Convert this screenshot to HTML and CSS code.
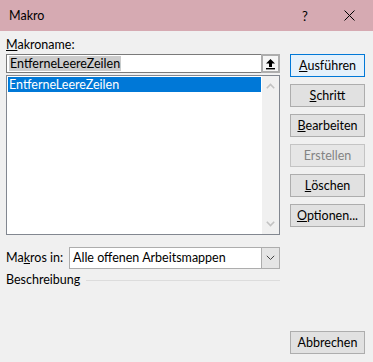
FILE: index.html
```html
<!DOCTYPE html>
<html lang="de">
<head>
<meta charset="utf-8">
<title>Makro</title>
<link rel="stylesheet" href="styles.css">
</head>
<body>
<div class="window">
  <div class="titlebar">
    <span class="title">Makro</span>
    <span class="help">?</span>
    <span class="close">
      <svg width="11" height="11" viewBox="0 0 11 11"><path d="M0.5 0.5 L10.5 10.5 M10.5 0.5 L0.5 10.5" stroke="#000" stroke-width="1" fill="none"/></svg>
    </span>
  </div>
  <div class="content">
    <div class="left">
      <div class="label"><u>M</u>akroname:</div>
      <div class="namebox">
        <span class="nametext"><span class="sel">EntferneLeereZeilen</span></span>
        <span class="upbtn">
          <svg width="11" height="12" viewBox="0 0 11 12"><path d="M5.5 1 L10 5.5 L7 5.5 L7 9 L4 9 L4 5.5 L1 5.5 Z" fill="#000"/><rect x="1" y="10" width="9" height="1.4" fill="#000"/></svg>
        </span>
      </div>
      <div class="list">
        <div class="items">
          <div class="item selected">EntferneLeereZeilen</div>
        </div>
        <div class="scrollbar">
          <svg width="9" height="6" viewBox="0 0 9 6"><path d="M0.8 5.2 L4.5 1.5 L8.2 5.2" stroke="#c2c2c2" stroke-width="1.6" fill="none"/></svg>
          <svg width="9" height="6" viewBox="0 0 9 6"><path d="M0.8 0.8 L4.5 4.5 L8.2 0.8" stroke="#c2c2c2" stroke-width="1.6" fill="none"/></svg>
        </div>
      </div>
      <div class="comborow">
        <span class="label">Ma<u>k</u>ros in:</span>
        <div class="combo">
          <span class="combotext">Alle offenen Arbeitsmappen</span>
          <span class="dropbtn">
            <svg width="9" height="6" viewBox="0 0 9 6"><path d="M0.8 0.8 L4.5 4.5 L8.2 0.8" stroke="#444" stroke-width="1" fill="none"/></svg>
          </span>
        </div>
      </div>
      <div class="descrow">
        <span class="label">Beschreibung</span>
        <span class="rule"></span>
      </div>
    </div>
    <div class="right">
      <div class="buttons">
        <div class="btn default"><u>A</u>usführen</div>
        <div class="btn"><u>S</u>chritt</div>
        <div class="btn"><u>B</u>earbeiten</div>
        <div class="btn disabled">Erstellen</div>
        <div class="btn"><u>L</u>öschen</div>
        <div class="btn"><u>O</u>ptionen...</div>
      </div>
      <div class="btn cancel">Abbrechen</div>
    </div>
  </div>
</div>
</body>
</html>
```
FILE: styles.css
```css
html, body {
  margin: 0;
  padding: 0;
}
body {
  width: 373px;
  height: 362px;
  background: #f0f0f0;
  font-family: Lato, "Noto Sans", sans-serif;
  font-size: 12.5px;
  color: #000;
  overflow: hidden;
}
.window {
  width: 373px;
  height: 362px;
  display: flex;
  flex-direction: column;
}
.titlebar {
  height: 31px;
  background: #d6aab2;
  display: flex;
  align-items: center;
  flex-shrink: 0;
}
.title {
  margin-left: 9px;
  flex: 1;
}
.help {
  font-size: 13px;
  width: 10px;
  margin-right: 32px;
}
.close {
  display: flex;
  margin-right: 18px;
}
.content {
  flex: 1;
  display: flex;
  padding: 0 8px 8px 6px;
  gap: 10px;
}
.left {
  width: 274px;
  display: flex;
  flex-direction: column;
}
.label {
  line-height: 16px;
  white-space: nowrap;
}
.left > .label {
  margin-top: 6px;
  margin-bottom: 1px;
}
.namebox {
  height: 19px;
  box-sizing: border-box;
  border: 1px solid #7a7a7a;
  border-right: none;
  background: #fff;
  display: flex;
  align-items: stretch;
}
.nametext {
  flex: 1;
  padding-left: 2px;
  display: flex;
  align-items: center;
}
.sel {
  background: #cccccc;
  line-height: 15px;
  padding: 0 1px;
}
.upbtn {
  width: 19px;
  margin-top: -1px;
  margin-bottom: -1px;
  box-sizing: border-box;
  border: 2px solid #adadad;
  background: #f6f6f6;
  display: flex;
  align-items: center;
  justify-content: center;
}
.list {
  margin-top: 2px;
  height: 160px;
  box-sizing: border-box;
  border: 1px solid #828790;
  background: #fff;
  display: flex;
}
.items {
  flex: 1;
  padding: 1px;
}
.item {
  height: 15px;
  line-height: 15px;
  padding-left: 1px;
}
.item.selected {
  background: #0078d7;
  color: #fff;
}
.scrollbar {
  width: 17px;
  background: #f0f0f0;
  display: flex;
  flex-direction: column;
  justify-content: space-between;
  align-items: center;
  padding: 7px 0 7px;
  box-sizing: border-box;
}
.comborow {
  margin-top: 12px;
  display: flex;
  align-items: center;
  height: 22px;
}
.comborow .label {
  width: 63px;
}
.combo {
  flex: 1;
  height: 22px;
  box-sizing: border-box;
  border: 1px solid #adadad;
  background: #fff;
  display: flex;
}
.combotext {
  flex: 1;
  padding-left: 3px;
  line-height: 20px;
}
.dropbtn {
  width: 17px;
  background: #e5e5e5;
  border-left: 1px solid #adadad;
  display: flex;
  align-items: center;
  justify-content: center;
}
.descrow {
  margin-top: 3px;
  display: flex;
  align-items: center;
  height: 16px;
}
.rule {
  flex: 1;
  height: 1px;
  background: #dcdcdc;
  margin-left: 6px;
}
.right {
  width: 75px;
  display: flex;
  flex-direction: column;
  justify-content: space-between;
}
.buttons {
  margin-top: 23px;
  display: flex;
  flex-direction: column;
  gap: 7px;
}
.btn {
  height: 23px;
  box-sizing: border-box;
  border: 1px solid #adadad;
  background: #e1e1e1;
  display: flex;
  align-items: center;
  justify-content: center;
  white-space: nowrap;
}
.btn.default {
  border: 1px solid #0078d7;
  background: #e5f1fb;
}
.btn.disabled {
  color: #838383;
  border-color: #c4c4c4;
  background: #e6e6e6;
}
```
